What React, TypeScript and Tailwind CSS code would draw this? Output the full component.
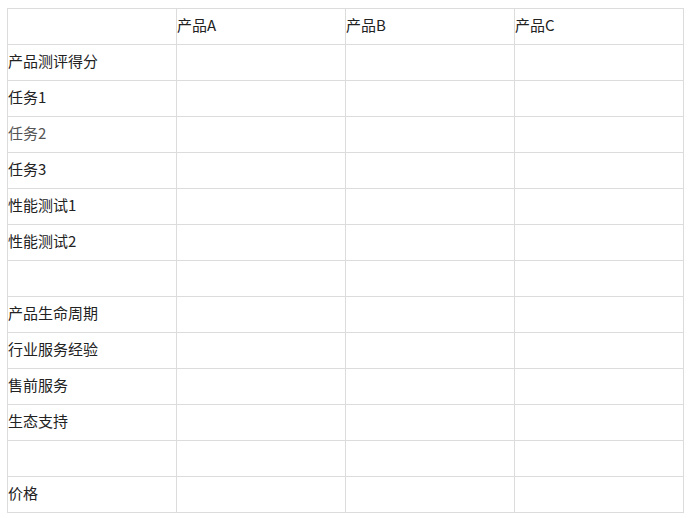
import React from 'react';

const rows: { label: string; muted?: boolean }[] = [
  { label: '产品测评得分' },
  { label: '任务1' },
  { label: '任务2', muted: true },
  { label: '任务3' },
  { label: '性能测试1' },
  { label: '性能测试2' },
  { label: '' },
  { label: '产品生命周期' },
  { label: '行业服务经验' },
  { label: '售前服务' },
  { label: '生态支持' },
  { label: '' },
  { label: '价格' },
];

const products = ['产品A', '产品B', '产品C'];

export default function App() {
  return (
    <div className="min-h-screen bg-white pl-[7px] pt-[8px] font-['Microsoft_YaHei','Noto_Sans_CJK_SC',sans-serif] text-[15px] leading-[20px] text-[#222]">
      <table className="w-[677px] table-fixed border-collapse">
        <tbody>
          <tr className="h-[36px]">
            <td className="border border-[#dcdcdc] p-0 pb-[3px] align-middle" />
            {products.map((p) => (
              <td key={p} className="border border-[#dcdcdc] p-0 pb-[3px] align-middle">
                {p}
              </td>
            ))}
          </tr>
          {rows.map((r, i) => (
            <tr key={i} className="h-[36px]">
              <td
                className={`border border-[#dcdcdc] p-0 pb-[3px] align-middle ${r.muted ? 'text-[#555]' : ''}`}
              >
                {r.label}
              </td>
              {products.map((p) => (
                <td key={p} className="border border-[#dcdcdc] p-0" />
              ))}
            </tr>
          ))}
        </tbody>
      </table>
    </div>
  );
}
